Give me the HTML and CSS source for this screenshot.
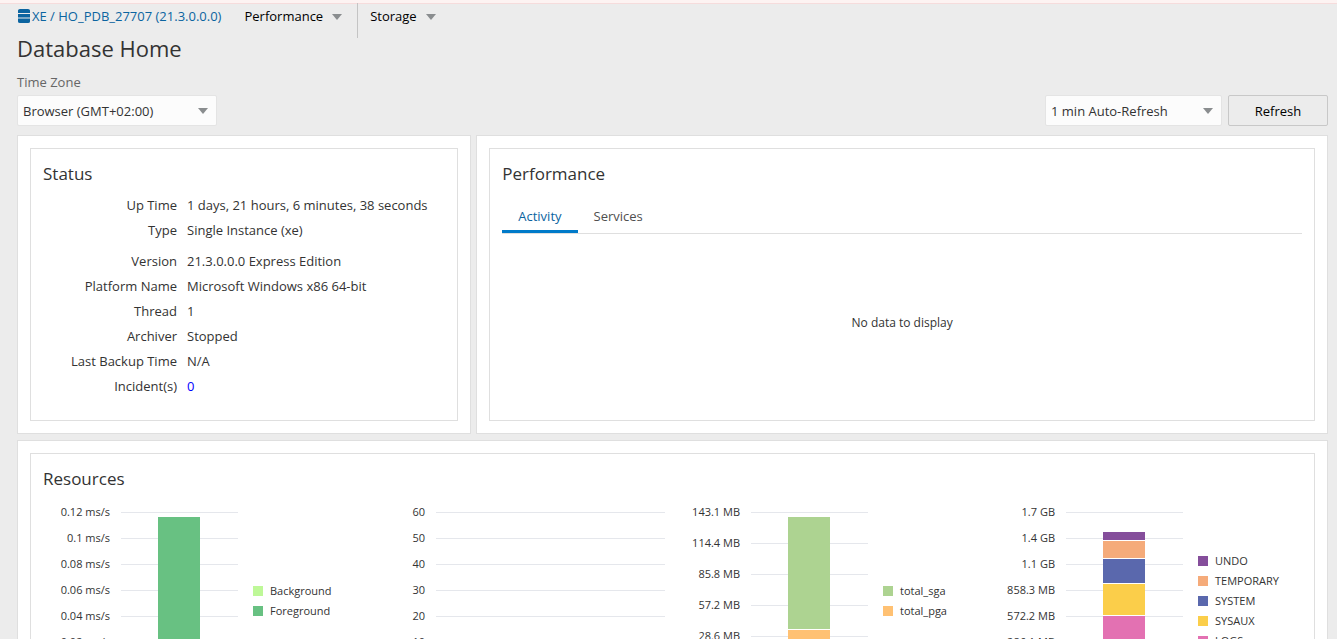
FILE: index.html
```html
<!DOCTYPE html>
<html lang="en">
<head>
<meta charset="utf-8">
<title>Database Home</title>
<link rel="stylesheet" href="styles.css">
</head>
<body>
<div class="page">
  <header class="topbar">
    <a class="db-link" href="#"><svg class="db-icon" width="12" height="14" viewBox="0 0 12 14" aria-hidden="true"><path d="M0 1.6Q0 0 2 0h8q2 0 2 1.6V4H0zM0 5h12v3.600H0zM0 9.500h12v2.900Q12 14 10 14H2q-2 0-2-1.600z" fill="#0b64a0"/></svg>XE / HO_PDB_27707 (21.3.0.0.0)</a>
    <nav class="menus">
      <button class="menu" type="button">Performance<span class="caret"></span></button>
      <button class="menu" type="button">Storage<span class="caret"></span></button>
    </nav>
  </header>
  <h1 class="title">Database Home</h1>
  <label class="zone-label" for="zone">Time Zone</label>
  <div class="toolbar">
    <span class="select-wrap zone"><select id="zone" class="select"><option>Browser (GMT+02:00)</option></select></span>
    <span class="select-wrap auto"><select class="select" aria-label="Auto refresh"><option>1 min Auto-Refresh</option></select></span>
    <button class="refresh" type="button">Refresh</button>
  </div>
  <main class="panels">
    <section class="panel status">
      <div class="card">
        <h2 class="heading">Status</h2>
        <dl class="facts">
          <dt>Up Time</dt><dd>1 days, 21 hours, 6 minutes, 38 seconds</dd>
          <dt>Type</dt><dd>Single Instance (xe)</dd>
        </dl>
        <dl class="facts">
          <dt>Version</dt><dd>21.3.0.0.0 Express Edition</dd>
          <dt>Platform Name</dt><dd>Microsoft Windows x86 64-bit</dd>
          <dt>Thread</dt><dd>1</dd>
          <dt>Archiver</dt><dd>Stopped</dd>
          <dt>Last Backup Time</dt><dd>N/A</dd>
          <dt>Incident(s)</dt><dd><a class="incident" href="#">0</a></dd>
        </dl>
      </div>
    </section>
    <section class="panel performance">
      <div class="card">
        <h2 class="heading">Performance</h2>
        <div class="tabs" role="tablist">
          <button class="tab active" type="button" role="tab" aria-selected="true">Activity</button>
          <button class="tab" type="button" role="tab" aria-selected="false">Services</button>
        </div>
        <div class="empty">No data to display</div>
      </div>
    </section>
    <section class="panel resources">
      <div class="card">
        <h2 class="heading">Resources</h2>
        <div class="charts">
          <div class="chart">
            <div class="axis six"><span>0.12 ms/s</span><span>0.1 ms/s</span><span>0.08 ms/s</span><span>0.06 ms/s</span><span>0.04 ms/s</span><span>0.02 ms/s</span><span>0 ms/s</span></div>
            <div class="plot six"><div class="bar"><i class="foreground"></i></div></div>
            <ul class="legend"><li><i class="background"></i>Background</li><li><i class="foreground"></i>Foreground</li></ul>
          </div>
          <div class="chart wide">
            <div class="axis six"><span>60</span><span>50</span><span>40</span><span>30</span><span>20</span><span>10</span><span>0</span></div>
            <div class="plot six"></div>
          </div>
          <div class="chart">
            <div class="axis five"><span>143.1 MB</span><span>114.4 MB</span><span>85.8 MB</span><span>57.2 MB</span><span>28.6 MB</span><span>0 MB</span></div>
            <div class="plot five"><div class="bar"><i class="sga"></i><i class="pga"></i></div></div>
            <ul class="legend"><li><i class="sga"></i>total_sga</li><li><i class="pga"></i>total_pga</li></ul>
          </div>
          <div class="chart">
            <div class="axis six"><span>1.7 GB</span><span>1.4 GB</span><span>1.1 GB</span><span>858.3 MB</span><span>572.2 MB</span><span>286.1 MB</span><span>0 MB</span></div>
            <div class="plot six"><div class="bar space"><i class="undo"></i><i class="temporary"></i><i class="system"></i><i class="sysaux"></i><i class="logs"></i></div></div>
            <ul class="legend"><li><i class="undo"></i>UNDO</li><li><i class="temporary"></i>TEMPORARY</li><li><i class="system"></i>SYSTEM</li><li><i class="sysaux"></i>SYSAUX</li><li><i class="logs"></i>LOGS</li></ul>
          </div>
        </div>
      </div>
    </section>
  </main>
</div>
</body>
</html>
```
FILE: styles.css
```css
* { box-sizing: border-box; }
html { background: #fff; }
body {
  margin: 0;
  height: 100vh;
  padding-bottom: 5px;
  overflow: hidden;
  font: 13px/20px "Open Sans", "Noto Sans", sans-serif;
  color: #333;
}
.page {
  height: 100%;
  overflow: hidden;
  padding: 0 9px 0 17px;
  background: #ececec;
  border-top: 3px solid #fdf3f2;
  box-shadow: inset 0 1px #f6dcdc;
}
h1, h2, dl, dd, ul { margin: 0; padding: 0; font-weight: 400; }
button, select { font: inherit; }
a { text-decoration: none; }

.topbar { display: flex; height: 35px; }
.db-link { display: flex; padding-top: 3px; color: #0b64a0; white-space: nowrap; }
.db-icon { margin: 3px 2px 0 1px; }
.menus { display: flex; margin-left: 11px; }
.menu {
  display: flex;
  gap: 9px;
  padding: 3px 15px 0 12px;
  border: 0;
  background: none;
  color: #000;
}
.menu + .menu { border-left: 1px solid #c4c4c4; }
.caret {
  width: 0;
  margin-top: 8px;
  border: 5px solid transparent;
  border-top: 6px solid #8a8d8f;
  border-bottom: 0;
}
.title { font-size: 22px; line-height: 24px; color: #333; margin-top: -2px; }
.zone-label { display: block; margin-top: 12px; color: #666; }

.toolbar { display: flex; gap: 6px; margin-top: 3px; }
.select-wrap { position: relative; display: flex; }
.select-wrap::after {
  content: "";
  position: absolute;
  right: 9px;
  top: 13px;
  border: 5px solid transparent;
  border-top: 6px solid #8a8d8f;
  border-bottom: 0;
  pointer-events: none;
}
.zone { width: 200px; margin-right: auto; }
.auto { width: 177px; }
.select {
  appearance: none;
  width: 100%;
  height: 31px;
  padding: 0 5px;
  border: 1px solid #e4e4e4;
  border-radius: 2px;
  background: #fcfcfc;
  color: #333;
}
.refresh {
  width: 100px;
  height: 31px;
  border: 1px solid #c8c8c8;
  border-radius: 2px;
  background: #ececec;
  color: #000;
}

.panels {
  display: grid;
  grid-template-columns: 8fr 15fr;
  gap: 6px 5px;
  margin-top: 9px;
}
.panel { padding: 12px; background: #fff; border: 1px solid #dfdfdf; }
.card { height: 100%; padding: 12px; border: 1px solid #dfdfdf; }
.status .card { padding-bottom: 21px; }
.heading { font-size: 17px; line-height: 26px; color: #333; }
.resources { grid-column: 1 / -1; }

.facts {
  display: grid;
  grid-template-columns: 134px 1fr;
  column-gap: 10px;
  line-height: 25px;
  margin-top: 6px;
  white-space: nowrap;
}
.facts dt { text-align: right; }
.incident { color: #00f; }

.tabs { display: flex; margin-top: 12px; border-bottom: 1px solid #dfdfdf; }
.tab {
  height: 34px;
  padding: 2px 16px 0;
  border: 0;
  border-bottom: 3px solid transparent;
  background: none;
  color: #4f4f4f;
}
.tab.active { color: #0b64a0; border-color: #007ac9; }
.empty { padding-top: 79px; text-align: center; font-size: 12px; }

.charts {
  display: grid;
  grid-template-columns: repeat(4, 1fr);
  gap: 1px;
  margin-top: 10px;
  font-size: 11px;
}
.chart { display: grid; grid-template-columns: 67px 117px 1fr; gap: 11px; }
.chart.wide { grid-template-columns: 67px 1fr; padding-right: 7px; }
.axis { display: flex; flex-direction: column; text-align: right; white-space: nowrap; }
.axis.six span { height: 26px; }
.axis.five span { height: 31px; }
.six { --step: 26px; }
.five { --step: 31px; }
.plot {
  height: 157px;
  margin-top: 10px;
  padding-top: 5px;
  background: repeating-linear-gradient(#e5e7ec 0 1px, transparent 1px var(--step));
}
.bar { display: flex; flex-direction: column; gap: 1px; width: 42px; height: 100%; margin-left: 37px; background: #fff; }
.bar i { flex: 1; }
.bar .sga { flex: 0 0 112px; }
.bar.space { margin-top: 15px; height: 136px; }
.bar .undo { flex: 0 0 8px; }
.bar .temporary { flex: 0 0 17px; }
.bar .system { flex: 0 0 24px; }
.bar .sysaux { flex: 0 0 31px; }
.legend { align-self: center; list-style: none; margin-top: 12px; padding-left: 4px; }
.legend li { display: flex; align-items: center; gap: 7px; }
.legend i { width: 10px; height: 10px; }
.background { background: #bef898; }
.foreground { background: #68c182; }
.sga { background: #add391; }
.pga { background: #ffc173; }
.undo { background: #854e9b; }
.temporary { background: #f5ab7a; }
.system { background: #5a68ad; }
.sysaux { background: #fbce4a; }
.logs { background: #e371b2; }
```
